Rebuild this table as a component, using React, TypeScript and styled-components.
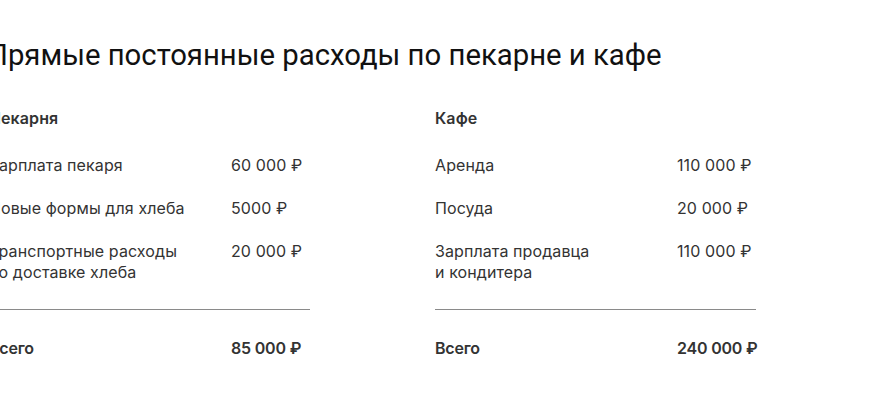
import React from 'react'
import styled, { createGlobalStyle } from 'styled-components'

const GlobalStyle = createGlobalStyle`
  html, body {
    margin: 0;
    padding: 0;
    background: #ffffff;
  }
`

const Page = styled.div`
  width: 880px;
  margin-left: -11px;
  padding-top: 38px;
  font-family: Inter, 'Noto Sans', sans-serif;
  color: #333333;
`

const Title = styled.h1`
  margin: 0 0 36px -2px;
  font-family: Roboto, 'Liberation Sans', sans-serif;
  font-size: 29.3px;
  line-height: 34px;
  font-weight: 400;
  color: #111111;
`

const Columns = styled.div`
  display: flex;
  gap: 125px;
`

const Table = styled.div<{ $labelWidth: number }>`
  width: 321px;
  display: grid;
  grid-template-columns: ${({ $labelWidth }) => `${$labelWidth}px minmax(0, 1fr)`};
  row-gap: 22px;
  font-size: 16px;
  line-height: 21px;
  letter-spacing: 0.1px;
`

const Heading = styled.div`
  grid-column: 1 / -1;
  font-weight: 600;
  margin-bottom: 4px;
`

const Cell = styled.div<{ $bold?: boolean }>`
  font-weight: ${({ $bold }) => ($bold ? 600 : 400)};
  letter-spacing: ${({ $bold }) => ($bold ? '-0.2px' : '0.1px')};
  white-space: nowrap;
`

const Divider = styled.div`
  grid-column: 1 / -1;
  height: 1px;
  background: #8a8a8a;
  margin: 4px 0 6px;
`

type Row = { label: string[]; value: string }

type Section = {
  name: string
  rows: Row[]
  total: string
}

const sections: Section[] = [
  {
    name: 'Пекарня',
    rows: [
      { label: ['Зарплата пекаря'], value: '60 000 ₽' },
      { label: ['Новые формы для хлеба'], value: '5000 ₽' },
      { label: ['Транспортные расходы', 'по доставке хлеба'], value: '20 000 ₽' }
    ],
    total: '85 000 ₽'
  },
  {
    name: 'Кафе',
    rows: [
      { label: ['Аренда'], value: '110 000 ₽' },
      { label: ['Посуда'], value: '20 000 ₽' },
      { label: ['Зарплата продавца', 'и кондитера'], value: '110 000 ₽' }
    ],
    total: '240 000 ₽'
  }
]

function CostTable({ section }: { section: Section }) {
  return (
    <Table $labelWidth={242}>
      <Heading>{section.name}</Heading>
      {section.rows.map((row, i) => (
        <React.Fragment key={i}>
          <Cell>
            {row.label.map((line, j) => (
              <div key={j}>{line}</div>
            ))}
          </Cell>
          <Cell>{row.value}</Cell>
        </React.Fragment>
      ))}
      <Divider />
      <Cell $bold>Всего</Cell>
      <Cell $bold>{section.total}</Cell>
    </Table>
  )
}

export default function App() {
  return (
    <>
      <GlobalStyle />
      <Page>
        <Title>Прямые постоянные расходы по пекарне и кафе</Title>
        <Columns>
          {sections.map(s => (
            <CostTable key={s.name} section={s} />
          ))}
        </Columns>
      </Page>
    </>
  )
}
